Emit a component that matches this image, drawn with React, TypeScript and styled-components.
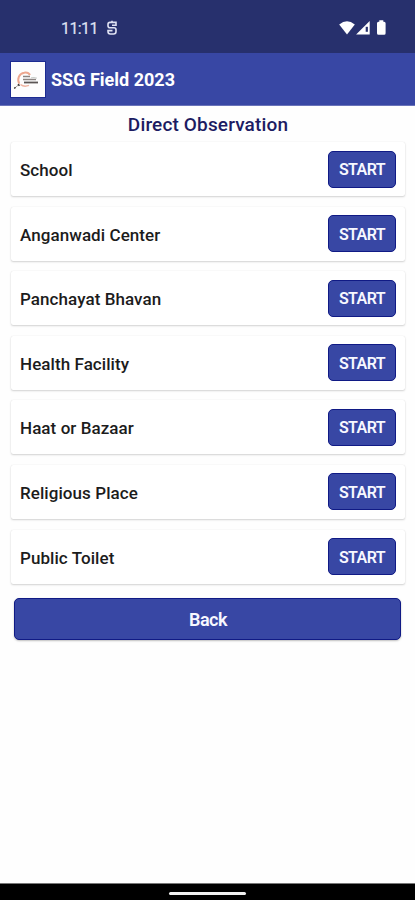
import React from "react";
import styled, { createGlobalStyle } from "styled-components";

const GlobalStyle = createGlobalStyle`
  *, *::before, *::after { box-sizing: border-box; }
  body { margin: 0; background: #fff; font-family: Roboto, "Liberation Sans", sans-serif; }
  button { font-family: inherit; }
`;

const Screen = styled.div`
  display: flex;
  flex-direction: column;
  height: 900px;
  overflow: hidden;
  background: #fefefe;
`;

const StatusBar = styled.div`
  display: flex;
  align-items: center;
  height: 53px;
  flex: none;
  padding: 3px 28px 0 61px;
  background: #27306d;
  color: #dfe2f3;
`;

const Clock = styled.span`
  width: 45px;
  padding-top: 1px;
  font-size: 16px;
  line-height: 20px;
  letter-spacing: -0.6px;
  -webkit-text-stroke: 0.2px currentColor;
`;

const StatusIcons = styled.div`
  display: flex;
  align-items: center;
  margin-left: auto;
`;

const AppBar = styled.header`
  display: flex;
  align-items: center;
  gap: 6px;
  height: 53px;
  flex: none;
  padding-left: 11px;
  background: #3847a4;
  border-bottom: 1px solid #6973b9;
`;

const Logo = styled.div`
  width: 34px;
  height: 35px;
  background: #fdfdfd;
  outline: 1px solid #1c2b91;
`;

const AppTitle = styled.h1`
  margin: 0;
  padding-top: 2px;
  font-size: 18px;
  font-weight: 700;
  line-height: 24px;
  color: #fff;
`;

const Content = styled.main`
  flex: 1;
  display: flex;
  flex-direction: column;
  padding: 0 10px 0 11px;
`;

const SectionTitle = styled.h2`
  margin: 0;
  height: 36px;
  padding-top: 7px;
  font-size: 19px;
  font-weight: 500;
  line-height: 24px;
  letter-spacing: 0.15px;
  text-align: center;
  color: #1c1b62;
`;

const SiteList = styled.div`
  display: flex;
  flex-direction: column;
  gap: 10.6px;
`;

const SiteCard = styled.div`
  display: flex;
  align-items: center;
  justify-content: space-between;
  height: 54px;
  padding: 0 9px;
  border-radius: 2px;
  background: #fff;
  box-shadow: 0 1px 2px rgba(0, 0, 0, 0.17), 0 0 1px rgba(0, 0, 0, 0.12);
`;

const SiteName = styled.span`
  padding-top: 2px;
  font-size: 17px;
  font-weight: 500;
  line-height: 22px;
  letter-spacing: 0.07px;
  color: #1c1c1c;
`;

const ActionButton = styled.button`
  display: flex;
  align-items: center;
  justify-content: center;
  border: 1px solid #101a85;
  border-radius: 5px;
  background: #3847a4;
  color: #f7f8ff;
  font-weight: 500;
`;

const StartButton = styled(ActionButton)`
  width: 68px;
  height: 37px;
  padding: 1px 0 0;
  font-size: 16px;
  letter-spacing: -0.55px;
  font-weight: 600;
`;

const BackButton = styled(ActionButton)`
  height: 42px;
  margin: 14px 4px 0 3px;
  padding: 2px 0 0 1px;
  font-size: 18px;
  font-weight: 600;
  letter-spacing: -0.5px;
  box-shadow: 0 1px 2px rgba(0, 0, 0, 0.25);
`;

const NavBar = styled.div`
  display: flex;
  justify-content: center;
  height: 17px;
  flex: none;
  padding-top: 8px;
  background: #000;
  border-top: 1px solid #777;
`;

const HomeHandle = styled.div`
  width: 77px;
  height: 3px;
  border-radius: 2px;
  background: #f2f2f2;
`;

const sites = [
  "School",
  "Anganwadi Center",
  "Panchayat Bhavan",
  "Health Facility",
  "Haat or Bazaar",
  "Religious Place",
  "Public Toilet",
];

const NotificationIcon = () => (
  <svg width="12" height="16" viewBox="0 0 12 16" fill="none" stroke="currentColor" strokeWidth="1.6">
    <path d="M10.8 2.4H4Q2 2.4 2 4.4V5.8Q2 7.8 4 7.8H8Q10 7.8 10 9.8V11.6Q10 14 7.6 14H4.4Q2 14 2 11.6V10.6H6.5M6 .8V2.4M10 2.4V5.2H6" />
  </svg>
);

const SignalIcons = () => (
  <svg width="50" height="18" viewBox="0 0 50 18" fill="#fff">
    <path d="M2.2 5.6Q10-1 17.8 5.6L10 15.4Z" />
    <path d="M32.7 2V15.6H19.1Z" />
    <path d="M28.7 7.8H30.9V12.8H28.7Z" fill="#27306d" />
    <path d="M42.3 1.2h4v1.5h.8q1.5 0 1.5 1.5v10q0 1.5-1.5 1.5h-5.6q-1.5 0-1.5-1.5v-10q0-1.5 1.5-1.5h.8Z" />
  </svg>
);

const LogoMark = () => (
  <svg width="34" height="35" viewBox="0 0 34 35" fill="none">
    <path d="M8.2 21.6C5.8 17 8.2 11.3 13.2 10.7C16 10.3 18.2 11.5 19 13" stroke="#eda78f" strokeWidth="2" />
    <path d="M9.5 22.5Q13 25.3 18 23.4" stroke="#efb3a0" strokeWidth="1.5" />
    <path d="M8.5 22L3.4 26.4" stroke="#aaa5a2" strokeWidth="1" />
    <path d="M7 22.2l1.5 1.5M3.4 25.4l1 1" stroke="#393432" strokeWidth="1.6" />
    <path d="M12 14.5h7M12 17.5h13" stroke="#8b8482" strokeWidth="1.3" />
    <path d="M13 20.5h14" stroke="#5b5554" strokeWidth="1.8" />
    <path d="M20 15.8q3-.8 6 .4" stroke="#c8cdc9" strokeWidth="1" />
  </svg>
);

export default function App() {
  return (
    <Screen>
      <GlobalStyle />
      <StatusBar>
        <Clock>11:11</Clock>
        <NotificationIcon />
        <StatusIcons><SignalIcons /></StatusIcons>
      </StatusBar>
      <AppBar>
        <Logo><LogoMark /></Logo>
        <AppTitle>SSG Field 2023</AppTitle>
      </AppBar>
      <Content>
        <SectionTitle>Direct Observation</SectionTitle>
        <SiteList>
          {sites.map((name) => (
            <SiteCard key={name}>
              <SiteName>{name}</SiteName>
              <StartButton>START</StartButton>
            </SiteCard>
          ))}
        </SiteList>
        <BackButton>Back</BackButton>
      </Content>
      <NavBar><HomeHandle /></NavBar>
    </Screen>
  );
}
